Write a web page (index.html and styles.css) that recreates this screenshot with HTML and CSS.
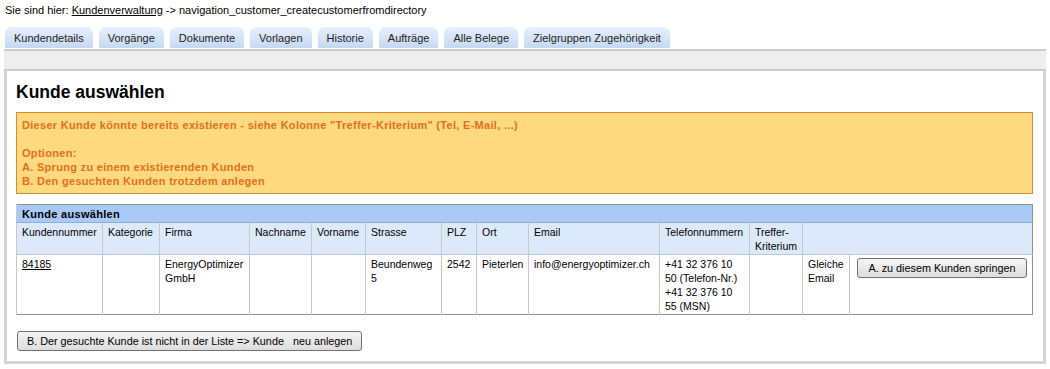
FILE: index.html
```html
<!DOCTYPE html>
<html lang="de">
<head>
    <meta charset="UTF-8">
    <title>Kunde auswählen</title>
    <link rel="stylesheet" href="styles.css">
</head>
<body>
    <div class="breadcrumb">Sie sind hier: <a href="#">Kundenverwaltung</a> -&gt; navigation_customer_createcustomerfromdirectory</div>

    <!-- Reiter -->
    <ul class="tabs">
        <li class="tab active">Kundendetails</li>
        <li class="tab">Vorgänge</li>
        <li class="tab">Dokumente</li>
        <li class="tab">Vorlagen</li>
        <li class="tab">Historie</li>
        <li class="tab">Aufträge</li>
        <li class="tab">Alle Belege</li>
        <li class="tab">Zielgruppen Zugehörigkeit</li>
    </ul>

    <div class="panel">
        <div class="toolbar"></div>
        <div class="panel-body">
            <h1>Kunde auswählen</h1>

            <div class="warning">
                Dieser Kunde könnte bereits existieren - siehe Kolonne "Treffer-Kriterium" (Tel, E-Mail, ...)<br>
                <br>
                Optionen:<br>
                A. Sprung zu einem existierenden Kunden<br>
                B. Den gesuchten Kunden trotzdem anlegen
            </div>

            <table class="list">
                <colgroup>
                    <col style="width:86px">
                    <col style="width:57px">
                    <col style="width:90px">
                    <col style="width:62px">
                    <col style="width:54px">
                    <col style="width:76px">
                    <col style="width:35px">
                    <col style="width:52px">
                    <col style="width:131px">
                    <col style="width:90px">
                    <col style="width:53px">
                    <col style="width:47px">
                    <col>
                </colgroup>
                <tr class="caption-row">
                    <th colspan="13">Kunde auswählen</th>
                </tr>
                <tr class="head-row">
                    <th>Kundennummer</th>
                    <th>Kategorie</th>
                    <th>Firma</th>
                    <th>Nachname</th>
                    <th>Vorname</th>
                    <th>Strasse</th>
                    <th>PLZ</th>
                    <th>Ort</th>
                    <th>Email</th>
                    <th>Telefonnummern</th>
                    <th>Treffer-Kriterium</th>
                    <th colspan="2"></th>
                </tr>
                <tr>
                    <td><a href="#">84185</a></td>
                    <td></td>
                    <td>EnergyOptimizer GmbH</td>
                    <td></td>
                    <td></td>
                    <td>Beundenweg 5</td>
                    <td>2542</td>
                    <td>Pieterlen</td>
                    <td>info@energyoptimizer.ch</td>
                    <td>+41 32 376 10 50 (Telefon-Nr.) +41 32 376 10 55 (MSN)</td>
                    <td></td>
                    <td>Gleiche Email</td>
                    <td><button class="button jump">A. zu diesem Kunden springen</button></td>
                </tr>
            </table>

            <button class="button create">B. Der gesuchte Kunde ist nicht in der Liste =&gt; Kunde &nbsp; neu anlegen</button>
        </div>
    </div>
</body>
</html>
```

FILE: styles.css
```css
body {
    margin: 0;
    font-family: "Liberation Sans", Arial, sans-serif;
    font-size: 10.5px;
    line-height: 14px;
    color: #000;
    background: #fff;
}

a {
    color: #000;
}

.breadcrumb {
    padding: 3px 5px 0;
    font-size: 11px;
}

/* Reiter */
.tabs {
    display: flex;
    gap: 6px;
    list-style: none;
    margin: 10px 0 0 5px;
    padding: 0;
}

.tab {
    height: 21px;
    line-height: 22px;
    padding: 0 9px;
    border-radius: 6px 6px 0 0;
    background: linear-gradient(#e8f0fb, #c4d8f2);
    color: #222;
    font-size: 11px;
}

.panel {
    margin: 1px 4px 0;
    border: 3px solid #d4d4d4;
    border-top: none;
}

.toolbar {
    height: 18px;
    background: #eeeeee;
    border-top: 2px solid #cccccc;
    border-bottom: 2px solid #cccccc;
    margin: 0 -3px;
}

.panel-body {
    padding: 9px 10px 10px 9px;
}

h1 {
    margin: 0 0 8px;
    font-size: 17.5px;
    line-height: 24px;
}

.warning {
    background: #fed97f;
    border: 1px solid #d98a2b;
    color: #e2701b;
    font-size: 11px;
    font-weight: bold;
    letter-spacing: 0.3px;
    padding: 5px;
    margin-bottom: 10px;
}

/* Tabelle */
.list {
    width: 100%;
    border-collapse: collapse;
    table-layout: fixed;
    border: 1px solid #8f8f8f;
}

.list th,
.list td {
    text-align: left;
    vertical-align: top;
    padding: 2px 5px 1px;
    border-left: 1px solid #c8c8c8;
}

.caption-row th {
    background: #a9c9f7;
    border-bottom: 1px solid #8faed9;
    font-size: 11px;
    letter-spacing: 0.3px;
    font-weight: bold;
}

.head-row th {
    background: #dce9fb;
    font-weight: normal;
    border-bottom: 1px solid #b9c8dc;
}

.button {
    font-family: inherit;
    font-size: 10.8px;
    color: #000;
    height: 20px;
    border: 1px solid #707070;
    border-radius: 3px;
    background: linear-gradient(#f4f4f4, #dddddd);
    padding: 0 9px;
    white-space: nowrap;
}

.jump {
    width: 170px;
    margin: 1px 0 0 2px;
}

.create {
    margin: 16px 0 0 1px;
}
```
